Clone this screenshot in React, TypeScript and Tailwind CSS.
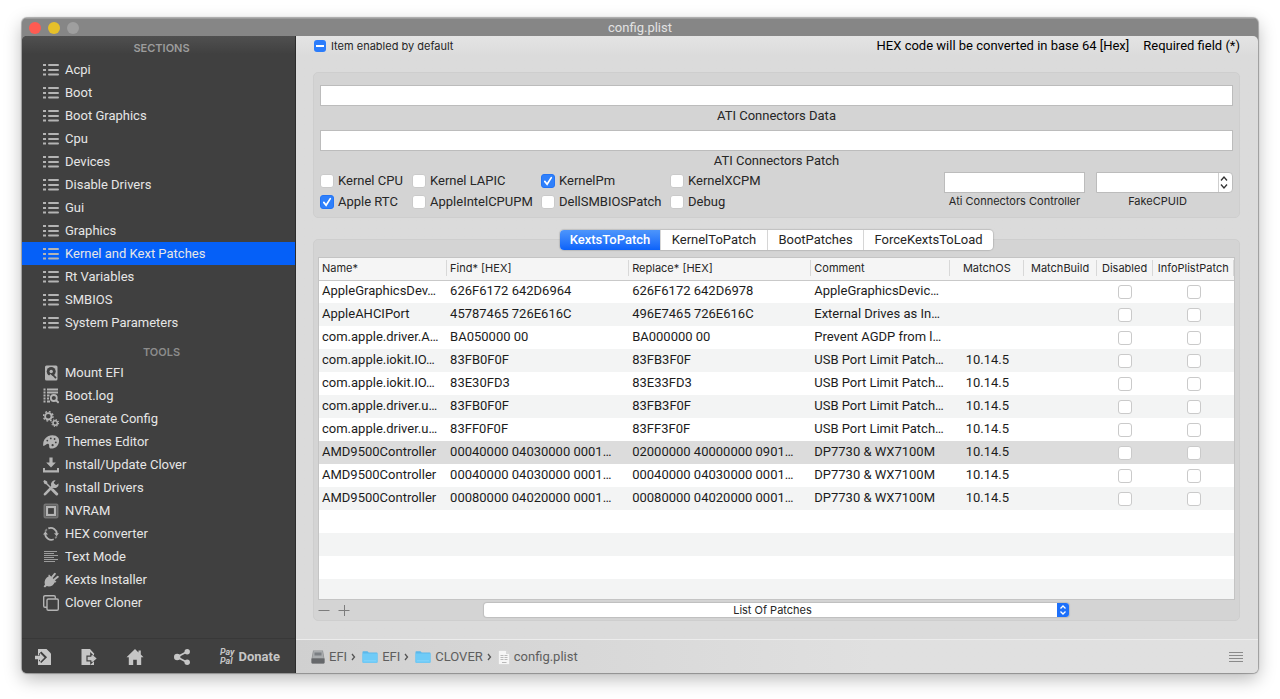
import React, { useState } from "react";

const sections = [
  "Acpi",
  "Boot",
  "Boot Graphics",
  "Cpu",
  "Devices",
  "Disable Drivers",
  "Gui",
  "Graphics",
  "Kernel and Kext Patches",
  "Rt Variables",
  "SMBIOS",
  "System Parameters",
];

const ListIcon = () => (
  <svg viewBox="0 0 16 14" className="h-[14px] w-4" fill="currentColor">
    <path d="M0 1h3v2H0zM0 6h3v2H0zM0 10.500h3v2H0z" />
    <rect x="5" y="1" width="11" height="2" rx="1" />
    <rect x="5" y="6" width="11" height="2" rx="1" />
    <rect x="5" y="10.500" width="11" height="2" rx="1" />
  </svg>
);

const DriveIcon = () => (
  <svg viewBox="0 0 16 16" className="size-4">
    <rect x="2" y="0.5" width="12.5" height="15" rx="1.5" fill="currentColor" />
    <circle cx="8.2" cy="6.5" r="4.5" fill="#404040" />
    <circle cx="8.2" cy="6.5" r="1.7" fill="currentColor" />
    <path d="M3.5 13.5l4-4.5 2 2-4 2.5z" fill="currentColor" />
    <path d="M8.6 8.5l4.4 4.6" stroke="#404040" strokeWidth="1.8" />
  </svg>
);

const LogIcon = () => (
  <svg viewBox="0 0 16 16" className="size-4" fill="none" stroke="currentColor">
    <path d="M0.5 1.5h2M0.5 4.5h2M0.5 7.5h2M0.5 10.5h2M0.5 13.5h2" strokeWidth="1.8" />
    <path d="M4 1.5h11M4 4.5h11M4 7.5h2.5M4 10.5h2M4 13.5h3" strokeWidth="1.8" />
    <circle cx="10.8" cy="10" r="3" strokeWidth="1.8" />
    <path d="M13 12.2l2.7 2.7" strokeWidth="2" />
  </svg>
);

const GearsIcon = () => (
  <svg viewBox="0 0 16 16" className="size-4" fill="none" stroke="currentColor">
    <circle cx="5.3" cy="5.3" r="3.2" strokeWidth="1.8" />
    <circle cx="5.3" cy="5.3" r="4.7" strokeWidth="1.5" strokeDasharray="1.8 1.89" />
    <circle cx="12.2" cy="12" r="2.2" strokeWidth="1.5" />
    <circle cx="12.2" cy="12" r="3.4" strokeWidth="1.1" strokeDasharray="1.3 1.37" />
  </svg>
);

const PaletteIcon = () => (
  <svg viewBox="0 0 16 16" className="size-4">
    <path
      d="M0.300 12C-.4 7.600 1.500 4 5 2.200c3.500-1.700 8.200-1.200 10.200 1.500 1.700 2.500.9 6.800-1.700 9.100-2.300 2-6 2.400-7 .9-.800-1.300.3-3.200-1.100-3.800-1.600-.6-3 2.100-5.100 2.100z"
      fill="currentColor"
    />
    <g fill="#404040">
      <circle cx="4.300" cy="6.600" r="0.900" />
      <circle cx="7.800" cy="4.400" r="0.900" />
      <circle cx="11.600" cy="5" r="0.900" />
      <circle cx="12.800" cy="8.400" r="0.900" />
      <circle cx="9.600" cy="11.200" r="1.100" />
    </g>
  </svg>
);

const InstallIcon = () => (
  <svg viewBox="0 0 16 16" className="size-4" fill="currentColor">
    <path d="M6.4 0.5h3.2v5h3.2L8 10.4 3.2 5.5h3.2z" />
    <path d="M0 11h2v2.2h12V11h2v4.5H0z" />
  </svg>
);

const DriversIcon = () => (
  <svg viewBox="0 0 16 16" className="size-4">
    <path d="M2 14.200L11 5" stroke="currentColor" strokeWidth="2.600" strokeLinecap="round" />
    <path d="M15.600 3.500a4 4 0 0 1-5.600 4.200L8.300 6A4 4 0 0 1 12.600.4L10.800 2.600l.5 2 2 .5z" fill="currentColor" />
    <path d="M1.500 1.500L8 8" stroke="currentColor" strokeWidth="1.500" />
    <path d="M0.300 1.200L1.500 0l2.600 1.500.3 1.600-1.300 1.200-1.500-.3z" fill="currentColor" />
    <path d="M9.500 9.800l4.200 4.200" stroke="currentColor" strokeWidth="3" strokeLinecap="round" />
  </svg>
);

const ChipIcon = () => (
  <svg viewBox="0 0 16 16" className="size-4" fill="none" stroke="currentColor">
    <rect x="1.500" y="1.500" width="13" height="13" rx="1" strokeWidth="2" opacity="0.450" />
    <rect x="4" y="4" width="8" height="8" strokeWidth="2.200" />
  </svg>
);

const SyncIcon = () => (
  <svg viewBox="0 0 16 16" className="size-4" fill="none" stroke="currentColor" strokeWidth="1.800">
    <path d="M5.300 2.400A6 6 0 0 1 13.800 8.200M10.700 13.200A6 6 0 0 1 2.200 7.600" />
    <path d="M2.200 5.600A6 6 0 0 1 4 3.300M13.700 10.400A6 6 0 0 1 12.200 12.200" opacity="0.600" />
    <path d="M11 7.200h5l-2.400 3zM0 8.600h5L2.400 5.600z" fill="currentColor" stroke="none" />
  </svg>
);

const TextIcon = () => (
  <svg viewBox="0 0 16 16" className="size-4" stroke="currentColor" opacity="0.800">
    <path d="M1 2.500h13M1 4.500h10M1 6.500h14M1 8.500h10M1 10.500h14M1 12.500h11" />
  </svg>
);

const PlugIcon = () => (
  <svg viewBox="0 0 16 16" className="size-4">
    <path
      d="M6 2.600l7.400 7.200c-.6.800-1.200.8-1.800.6-1 3-4.800 5-7.800 3.600l-1.800 1.600-1.400-1.200 1.400-1.800C.8 9.600 2.600 5.800 5.600 4.600c-.2-.8-.2-1.400.4-2z"
      fill="currentColor"
    />
    <path d="M9.200 5.200l2.600-3.400M11.400 7.600l3.400-2.800" stroke="currentColor" strokeWidth="2" strokeLinecap="round" />
  </svg>
);

const CloneIcon = () => (
  <svg viewBox="0 0 16 16" className="size-4" fill="none" stroke="currentColor" strokeWidth="1.4">
    <path d="M4 12.3H2A1.3 1.3 0 0 1 .7 11V2A1.3 1.3 0 0 1 2 .7h9A1.3 1.3 0 0 1 12.300 2v1.800" />
    <rect x="4" y="4" width="11.300" height="11.300" rx="1.300" />
  </svg>
);

const ImportIcon = () => (
  <svg viewBox="0 0 16 16" className="size-4">
    <path d="M3 0h8.500L16 4.500V16H3z" fill="currentColor" />
    <path d="M0.500 8h6M5 3.800L9.500 8.300 5 12.800" fill="none" stroke="#404040" strokeWidth="3.600" />
    <path d="M0 6.800h5V4l4.500 4.500L5 13v-2.800H0z" fill="currentColor" />
  </svg>
);

const ExportIcon = () => (
  <svg viewBox="0 0 16 16" className="size-4">
    <path d="M0.500 0H9l4 4.500V16H0.500z" fill="currentColor" />
    <path d="M6 7.200h3.800V4.500l5 5-5 5v-2.700H6z" fill="currentColor" stroke="#404040" strokeWidth="1.200" />
    <path d="M11 6.500l3.500 3-3.500 3" fill="none" stroke="currentColor" strokeWidth="1.500" />
  </svg>
);

const HomeIcon = () => (
  <svg viewBox="0 0 18 16" className="h-4 w-[18px]" fill="currentColor">
    <path d="M9 0l3.500 3.400V1.500h2.300v4.100L17.500 8.300H15.200V16h-4.400v-5.200H7.200V16H2.800V8.300H.5z" />
  </svg>
);

const ShareIcon = () => (
  <svg viewBox="0 0 16 16" className="size-4" fill="currentColor">
    <path d="M13 2.800L3 8l10 5.200" fill="none" stroke="currentColor" strokeWidth="1.700" />
    <circle cx="3.200" cy="8" r="3.200" />
    <circle cx="13.200" cy="2.800" r="2.700" />
    <circle cx="13.200" cy="13.200" r="2.700" />
  </svg>
);

const tools = [
  { label: "Mount EFI", icon: <DriveIcon /> },
  { label: "Boot.log", icon: <LogIcon /> },
  { label: "Generate Config", icon: <GearsIcon /> },
  { label: "Themes Editor", icon: <PaletteIcon /> },
  { label: "Install/Update Clover", icon: <InstallIcon /> },
  { label: "Install Drivers", icon: <DriversIcon /> },
  { label: "NVRAM", icon: <ChipIcon /> },
  { label: "HEX converter", icon: <SyncIcon /> },
  { label: "Text Mode", icon: <TextIcon /> },
  { label: "Kexts Installer", icon: <PlugIcon /> },
  { label: "Clover Cloner", icon: <CloneIcon /> },
];

const kernelFlags = [
  { label: "Kernel CPU", on: false },
  { label: "Kernel LAPIC", on: false },
  { label: "KernelPm", on: true },
  { label: "KernelXCPM", on: false },
  { label: "Apple RTC", on: true },
  { label: "AppleIntelCPUPM", on: false },
  { label: "DellSMBIOSPatch", on: false },
  { label: "Debug", on: false },
];

const tabs = [
  { label: "KextsToPatch", width: "w-[101px]" },
  { label: "KernelToPatch", width: "w-[107px]" },
  { label: "BootPatches", width: "w-24" },
  { label: "ForceKextsToLoad", width: "w-[129px]" },
];

const columns = [
  { label: "Name*", width: "w-[14%]", center: false },
  { label: "Find* [HEX]", width: "w-[19.9%]", center: false },
  { label: "Replace* [HEX]", width: "w-[19.9%]", center: false },
  { label: "Comment", width: "w-[15.2%]", center: false },
  { label: "MatchOS", width: "w-[8.1%]", center: true },
  { label: "MatchBuild", width: "w-[7.9%]", center: true },
  { label: "Disabled", width: "w-[6.2%]", center: true },
  { label: "InfoPlistPatch", width: "w-[8.8%]", center: true },
];

const rows = [
  ["AppleGraphicsDev…", "626F6172 642D6964", "626F6172 642D6978", "AppleGraphicsDevic…", ""],
  ["AppleAHCIPort", "45787465 726E616C", "496E7465 726E616C", "External Drives as In…", ""],
  ["com.apple.driver.A…", "BA050000 00", "BA000000 00", "Prevent AGDP from l…", ""],
  ["com.apple.iokit.IO…", "83FB0F0F", "83FB3F0F", "USB Port Limit Patch…", "10.14.5"],
  ["com.apple.iokit.IO…", "83E30FD3", "83E33FD3", "USB Port Limit Patch…", "10.14.5"],
  ["com.apple.driver.u…", "83FB0F0F", "83FB3F0F", "USB Port Limit Patch…", "10.14.5"],
  ["com.apple.driver.u…", "83FF0F0F", "83FF3F0F", "USB Port Limit Patch…", "10.14.5"],
  ["AMD9500Controller", "00040000 04030000 0001…", "02000000 40000000 0901…", "DP7730 & WX7100M", "10.14.5"],
  ["AMD9500Controller", "00040000 04030000 0001…", "00040000 04030000 0001…", "DP7730 & WX7100M", "10.14.5"],
  ["AMD9500Controller", "00080000 04020000 0001…", "00080000 04020000 0001…", "DP7730 & WX7100M", "10.14.5"],
];

const CheckBox = ({ label, checked }: { label?: string; checked?: boolean }) => (
  <span className="relative block size-[14px] shrink-0">
    <input
      type="checkbox"
      aria-label={label}
      defaultChecked={checked}
      className="peer block size-[14px] appearance-none rounded-[3px] border border-[#cacaca] bg-white checked:border-[#2374f5] checked:bg-[#2f80fb]"
    />
    <svg viewBox="0 0 14 14" className="pointer-events-none absolute inset-0 hidden size-[14px] peer-checked:block">
      <path d="M3.800 7.400l2.300 2.800 4.200-6.600" fill="none" stroke="white" strokeWidth="1.700" strokeLinecap="round" />
    </svg>
  </span>
);

const SideItem = ({
  label,
  icon,
  active,
  onClick,
}: {
  label: string;
  icon: React.ReactNode;
  active?: boolean;
  onClick?: () => void;
}) => (
  <li>
    <button
      onClick={onClick}
      className={`flex h-[23px] w-full items-center gap-[6px] pl-[21px] text-left text-[13px] text-[#e6e6e6] ${
        active ? "bg-[#0560f8]" : ""
      }`}
    >
      <span className="text-[#b4b4b4]">{icon}</span>
      {label}
    </button>
  </li>
);

const FolderIcon = () => (
  <svg viewBox="0 0 16 12" className="h-3 w-4">
    <path d="M0.500 1a.7.7 0 0 1 .7-.7h4.300l1.200 1.200h8.100a.7.7 0 0 1 .7.7V11a.7.7 0 0 1-.7.700H1.200a.7.7 0 0 1-.7-.700z" fill="#5cb8ea" />
    <path d="M0.500 2.600h15V11a.7.7 0 0 1-.7.700H1.200a.7.7 0 0 1-.7-.700z" fill="#6fcbf7" />
    <path d="M2.500 9.800h11" stroke="#9bdcfb" strokeDasharray="1 1" />
  </svg>
);

const DiskIcon = () => (
  <svg viewBox="0 0 14 14" className="size-[14px]">
    <path d="M2 0.500h10L13.500 9v3.500a1 1 0 0 1-1 1h-11a1 1 0 0 1-1-1V9z" fill="#8f9193" />
    <path d="M2.600 1h8.800l1.300 7H1.300z" fill="#a9acae" />
    <path d="M3.500 2.500h7v3h-7z" fill="#7b7f83" />
    <path d="M0.500 8.500h13v4a1 1 0 0 1-1 1h-11a1 1 0 0 1-1-1z" fill="#66686b" />
  </svg>
);

const PlistIcon = () => (
  <svg viewBox="0 0 12 15" className="h-[15px] w-3">
    <path d="M0.500 0.500h7.500l3.500 3.500v10.500h-11z" fill="#f6f6f6" stroke="#d2d2d2" strokeWidth="0.600" />
    <path d="M8 0.500v3.500h3.500z" fill="#d8d8d8" />
    <path d="M2.500 5.500h3M2.500 7.500h3M2.500 9.500h3M6.500 5.500h3M6.500 7.500h3M6.500 9.500h3M4 12.500h4.500" stroke="#b9b9b9" />
  </svg>
);

const Crumb = ({ icon, label, last }: { icon: React.ReactNode; label: string; last?: boolean }) => (
  <li className="flex items-center gap-1">
    {icon}
    <a href="#">{label}</a>
    {!last && (
      <svg viewBox="0 0 5 8" className="mr-[2px] h-2 w-[5px]">
        <path d="M1 1l2.500 3L1 7" fill="none" stroke="#555" strokeWidth="1.300" />
      </svg>
    )}
  </li>
);

const App: React.FC = () => {
  const [section, setSection] = useState("Kernel and Kext Patches");
  const [tab, setTab] = useState("KextsToPatch");
  const [selected, setSelected] = useState(7);

  return (
    <div className="flex min-h-screen bg-white pt-[18px] pr-[22px] pb-[26px] pl-[22px] font-['Roboto','Liberation_Sans',sans-serif] text-[#262626]">
      <div className="flex min-w-0 flex-1 flex-col overflow-hidden rounded-[5px] bg-[#868686] shadow-[0_0_1px_1px_rgba(0,0,0,0.3),0_6px_18px_rgba(0,0,0,0.28)]">
        <header className="flex h-[18px] items-center border-t border-[#9b9b9b] px-[7px]">
          <div className="flex flex-1 gap-[7px]">
            <button aria-label="Close" className="size-3 rounded-full bg-[#fe5b52]" />
            <button aria-label="Minimize" className="size-3 rounded-full bg-[#e6c029]" />
            <button aria-label="Zoom" className="size-3 rounded-full bg-[#9f9f9f]" />
          </div>
          <h1 className="text-[13px] leading-4 text-[#e2e2e2]">config.plist</h1>
          <div className="flex-1" />
        </header>

        <div className="flex flex-1">
          <aside className="flex w-[274px] shrink-0 flex-col rounded-tl-[5px] border-r border-[#2c2c2c] bg-[#404040] bg-linear-to-b from-[#505050] to-[#404040] to-[18px]">
            <h2 className="pt-[3px] pb-px pl-[6px] text-center font-['Inter'] text-[11px] leading-[18px] font-semibold text-[#9c9c9c]">
              SECTIONS
            </h2>
            <ul>
              {sections.map((name) => (
                <SideItem
                  key={name}
                  label={name}
                  icon={<ListIcon />}
                  active={name === section}
                  onClick={() => setSection(name)}
                />
              ))}
            </ul>
            <h2 className="pt-[9px] pl-[6px] text-center font-['Inter'] text-[11px] leading-[18px] font-semibold text-[#8c8c8c]">
              TOOLS
            </h2>
            <ul>
              {tools.map((tool) => (
                <SideItem key={tool.label} label={tool.label} icon={tool.icon} />
              ))}
            </ul>
            <div className="mt-auto flex h-[35px] items-center justify-between border-t border-[#383838] pt-px pr-[15px] pl-[13px] text-[#c6c6c6]">
              <button aria-label="Import">
                <ImportIcon />
              </button>
              <button aria-label="Export">
                <ExportIcon />
              </button>
              <button aria-label="Home">
                <HomeIcon />
              </button>
              <button aria-label="Share">
                <ShareIcon />
              </button>
              <button className="flex items-center gap-1">
                <span className="text-left text-[9px] leading-[9px] font-bold italic">
                  Pay
                  <br />
                  Pal
                </span>
                <span className="text-[13px] font-bold">Donate</span>
              </button>
            </div>
          </aside>

          <main className="flex min-w-0 flex-1 flex-col rounded-tr-[5px] bg-[#dbdbdb] bg-linear-to-b from-[#e4e4e4] to-[#dbdbdb] to-[20px]">
            <div className="flex h-5 items-center justify-between px-[18px]">
              <label className="flex items-center gap-[5px] font-['Inter'] text-[11px]">
                <span className="relative block size-3">
                  <input type="checkbox" defaultChecked className="block size-3 appearance-none rounded-[3px] bg-[#2b7cfb]" />
                  <span className="pointer-events-none absolute inset-x-[2px] top-[5px] h-[2px] bg-white" />
                </span>
                Item enabled by default
              </label>
              <div className="flex gap-[14px] text-[13px] text-black">
                <span>HEX code will be converted in base 64 [Hex]</span>
                <span>Required field (*)</span>
              </div>
            </div>

            <section className="mt-4 mr-[18px] ml-[17px] rounded-[5px] border border-[#cecece] bg-[#d4d4d4] px-[6px] pt-3 pb-[5px]">
              <input id="ati-data" className="block h-[21px] w-full border border-[#bcbcbc] bg-white px-1 text-[13px]" />
              <label htmlFor="ati-data" className="block text-center text-[13px] leading-[19px]">
                ATI Connectors Data
              </label>
              <input id="ati-patch" className="mt-[5px] block h-[21px] w-full border border-[#bcbcbc] bg-white px-1 text-[13px]" />
              <label htmlFor="ati-patch" className="block text-center text-[13px] leading-[19px]">
                ATI Connectors Patch
              </label>
              <div className="flex justify-between">
                <div className="grid grid-cols-[92px_129px_129px_120px] text-[13px]">
                  {kernelFlags.map((flag) => (
                    <label key={flag.label} className="flex h-[21px] items-center gap-1 whitespace-nowrap">
                      <CheckBox checked={flag.on} />
                      {flag.label}
                    </label>
                  ))}
                </div>
                <div className="flex gap-[11px] pt-[2px] font-['Inter'] text-[11px]">
                  <div className="w-[141px] text-center">
                    <input id="ati-controller" className="block h-[21px] w-full border border-[#bcbcbc] bg-white px-1" />
                    <label htmlFor="ati-controller" className="block leading-[16px]">
                      Ati Connectors Controller
                    </label>
                  </div>
                  <div className="relative w-[137px] text-center">
                    <select
                      id="fake-cpuid"
                      className="block h-[21px] w-full appearance-none rounded-r-[4px] border border-[#bcbcbc] bg-white px-1"
                    >
                      <option></option>
                    </select>
                    <svg viewBox="0 0 14 19" className="pointer-events-none absolute top-px right-px h-[19px] w-[14px]">
                      <path d="M0.500 0v19" stroke="#cfcfcf" />
                      <path d="M3 7.500l3-3.500 3 3.500M3 11.500l3 3.500 3-3.500" fill="none" stroke="#333" strokeWidth="1.300" />
                    </svg>
                    <label htmlFor="fake-cpuid" className="block pr-[14px] leading-[16px]">
                      FakeCPUID
                    </label>
                  </div>
                </div>
              </div>
            </section>

            <div className="mt-3 mr-[18px] ml-[17px] flex flex-1 flex-col">
              <div role="tablist" className="z-10 -mb-[11px] flex justify-center">
                <div className="flex h-5 divide-x divide-[#d6d6d6] overflow-hidden rounded-[4px] bg-white text-[13px] shadow-[0_0_1px_1px_rgba(0,0,0,0.12)]">
                  {tabs.map((t) => (
                    <button
                      key={t.label}
                      role="tab"
                      aria-selected={t.label === tab}
                      onClick={() => setTab(t.label)}
                      className={`${t.width} ${
                        t.label === tab ? "bg-linear-to-b from-[#4d95fb] to-[#0a62fa] font-medium text-white" : ""
                      }`}
                    >
                      {t.label}
                    </button>
                  ))}
                </div>
              </div>
              <section className="flex flex-1 flex-col rounded-[5px] border border-[#cecece] bg-[#d4d4d4] px-1 pt-[17px]">
                <div className="flex-1 border border-[#c4c4c4] bg-[#f3f4f4]">
                  <table className="w-full table-fixed text-[13px]">
                    <thead>
                      <tr className="h-[22px] border-b border-[#c9c9c9] bg-[#f5f5f5] font-['Inter'] text-[11px]">
                        {columns.map((col) => (
                          <th
                            key={col.label}
                            className={`${col.width} p-0 pb-[2px] font-normal whitespace-nowrap ${col.center ? "text-center" : "text-left"}`}
                          >
                            <div className={`border-r border-[#d8d8d8] leading-4 ${col.center ? "" : "pl-[3px]"}`}>{col.label}</div>
                          </th>
                        ))}
                      </tr>
                    </thead>
                    <tbody>
                      {rows.map((row, i) => (
                        <tr
                          key={i}
                          onClick={() => setSelected(i)}
                          className={`h-[23px] ${i === selected ? "bg-[#dcdcdc]" : i % 2 ? "bg-[#f3f4f4]" : "bg-white"}`}
                        >
                          {row.map((cell, j) => (
                            <td
                              key={j}
                              className={`p-0 pb-px leading-5 whitespace-nowrap text-[#1c1c1c] ${j === 4 ? "text-center" : "pl-[3px]"}`}
                            >
                              {cell}
                            </td>
                          ))}
                          <td />
                          <td className="p-0">
                            <div className="flex justify-center">
                              <CheckBox label={`Disabled ${i + 1}`} />
                            </div>
                          </td>
                          <td className="p-0">
                            <div className="flex justify-center">
                              <CheckBox label={`InfoPlistPatch ${i + 1}`} />
                            </div>
                          </td>
                        </tr>
                      ))}
                      {["bg-white", "bg-[#f3f4f4]", "bg-white"].map((bg, i) => (
                        <tr key={i} className={`h-[23px] ${bg}`}>
                          <td colSpan={8} />
                        </tr>
                      ))}
                    </tbody>
                  </table>
                </div>
                <div className="flex h-5 items-center">
                  <div className="flex w-[166px] gap-2 text-[#7c7c7c]">
                    <button aria-label="Remove">
                      <svg viewBox="0 0 12 12" className="size-3" stroke="currentColor">
                        <path d="M0.500 6.500h11" />
                      </svg>
                    </button>
                    <button aria-label="Add">
                      <svg viewBox="0 0 12 12" className="size-3" stroke="currentColor">
                        <path d="M0.500 6.500h11M6.500 1v11" />
                      </svg>
                    </button>
                  </div>
                  <div className="relative mr-[166px] flex-1">
                    <select
                      aria-label="List Of Patches"
                      className="block h-[14px] w-full appearance-none rounded-[3px] bg-white pr-2 text-center font-['Inter'] text-[11px] leading-[14px] shadow-[0_0_1px_1px_rgba(0,0,0,0.1)] [text-align-last:center]"
                    >
                      <option>List Of Patches</option>
                    </select>
                    <svg viewBox="0 0 12 14" className="pointer-events-none absolute top-0 right-0 h-[14px] w-3">
                      <path d="M0 0h9a3 3 0 0 1 3 3v8a3 3 0 0 1-3 3H0z" fill="#1d70fa" />
                      <path d="M3.500 5.500L6 3l2.500 2.500M3.500 8.500L6 11l2.500-2.500" fill="none" stroke="white" strokeWidth="1.300" />
                    </svg>
                  </div>
                </div>
              </section>
            </div>

            <footer className="mt-[18px] flex h-[34px] items-center justify-between border-t border-[#ececec] bg-linear-to-r from-[#d0d0d0] to-[#e0e0e0] to-60% pt-px pr-[15px] pl-[15px]">
              <ol className="flex items-center gap-1 text-[13px] text-[#5e5e5e]">
                <Crumb icon={<DiskIcon />} label="EFI" />
                <Crumb icon={<FolderIcon />} label="EFI" />
                <Crumb icon={<FolderIcon />} label="CLOVER" />
                <Crumb icon={<PlistIcon />} label="config.plist" last />
              </ol>
              <button aria-label="Menu">
                <svg viewBox="0 0 14 12" className="h-3 w-[14px]" stroke="#8a8a8a">
                  <path d="M0 1.500h14M0 4.500h14M0 7.500h14M0 10.500h14" />
                </svg>
              </button>
            </footer>
          </main>
        </div>
      </div>
    </div>
  );
};

export default App;
